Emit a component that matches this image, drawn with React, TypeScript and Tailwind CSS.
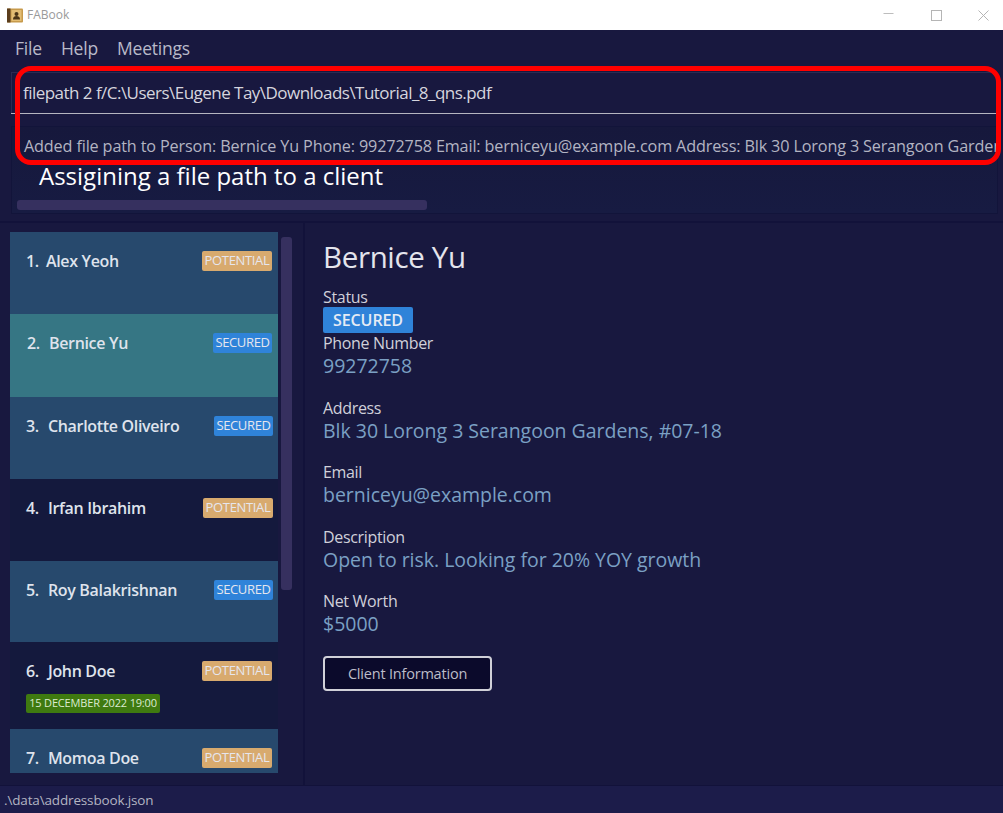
const font = "font-['Open_Sans','Noto_Sans',sans-serif]"

type Client = {
  index: number
  name: string
  status: 'POTENTIAL' | 'SECURED'
  height: string
  bg: string
  pad: string
  meeting?: string
}

const clients: Client[] = [
  { index: 1, name: 'Alex Yeoh', status: 'POTENTIAL', height: 'h-[82px]', bg: 'bg-[#27496d]', pad: 'pl-4 pr-[6px]' },
  { index: 2, name: 'Bernice Yu', status: 'SECURED', height: 'h-[83px]', bg: 'bg-[#367684]', pad: 'pl-[17px] pr-[6px]' },
  { index: 3, name: 'Charlotte Oliveiro', status: 'SECURED', height: 'h-[82px]', bg: 'bg-[#27496d]', pad: 'pl-4 pr-[5px]' },
  { index: 4, name: 'Irfan Ibrahim', status: 'POTENTIAL', height: 'h-[82px]', bg: 'bg-[#14193d]', pad: 'pl-4 pr-[5px]' },
  { index: 5, name: 'Roy Balakrishnan', status: 'SECURED', height: 'h-[81px]', bg: 'bg-[#27496d]', pad: 'pl-4 pr-[5px]' },
  { index: 6, name: 'John Doe', status: 'POTENTIAL', height: 'h-[87px]', bg: 'bg-[#14193d]', pad: 'pl-4 pr-[6px]', meeting: '15 DECEMBER 2022 19:00' },
  { index: 7, name: 'Momoa Doe', status: 'POTENTIAL', height: 'h-[44px]', bg: 'bg-[#27496d]', pad: 'pl-4 pr-[6px]' },
]

const details = [
  { label: 'Address', value: 'Blk 30 Lorong 3 Serangoon Gardens, #07-18' },
  { label: 'Email', value: 'berniceyu@example.com' },
  { label: 'Description', value: 'Open to risk. Looking for 20% YOY growth' },
  { label: 'Net Worth', value: '$5000' },
]

function StatusTag({ status }: { status: Client['status'] }) {
  const color = status === 'SECURED' ? 'bg-[#2f83d9] w-[59px]' : 'bg-[#d8aa6e] w-[70px]'
  return (
    <span className={`${color} flex h-5 items-center justify-center rounded-[2px] text-[13px] tracking-[-0.35px] text-[#e6e6ee]`}>
      {status}
    </span>
  )
}

function ClientCard({ client }: { client: Client }) {
  return (
    <div className={`${client.height} ${client.bg} ${client.pad} shrink-0 overflow-hidden pt-[18px]`}>
      <div className="flex items-center justify-between">
        <span className="flex text-[16px] leading-[22px] font-semibold tracking-[-0.32px] text-[#dfe3ec]">
          <span>{client.index}.</span>
          <span className={client.index === 1 ? 'ml-[7px]' : 'ml-[9px]'}>{client.name}</span>
        </span>
        <StatusTag status={client.status} />
      </div>
      {client.meeting && (
        <span className="mt-[12px] flex h-[19px] w-[134px] items-center justify-center rounded-[2px] bg-[#3f7a10] text-[11px] tracking-[-0.17px] text-[#dcebd0]">
          {client.meeting}
        </span>
      )}
    </div>
  )
}

function Field({ label, value }: { label: string; value: string }) {
  return (
    <div className="mb-[19.5px] flex flex-col">
      <span className="text-[16px] leading-[20px] tracking-[-0.33px] text-[#d0d0da]">{label}</span>
      <span className="text-[19.5px] leading-[25px] tracking-[-0.02px] text-[#7ba0c4]">{value}</span>
    </div>
  )
}

export default function App() {
  return (
    <div className={`${font} relative flex h-[813px] w-[1003px] flex-col overflow-hidden bg-[#18183f]`}>
      <header className="flex h-[30px] shrink-0 items-center bg-white pl-[7px]">
        <svg width="16" height="15" viewBox="0 0 16 15">
          <rect x="0" y="0.5" width="16" height="14" rx="1" fill="#c79a4b" />
          <rect x="0" y="0.5" width="3.5" height="14" fill="#5b3d1c" />
          <rect x="4.5" y="2" width="10" height="11" fill="#e3bd74" />
          <circle cx="9.5" cy="6" r="2" fill="#4a3416" />
          <path d="M6 11.5c0-2.4 1.600-3.400 3.500-3.400s3.500 1 3.500 3.400z" fill="#4a3416" />
        </svg>
        <span className="ml-[4px] text-[12px] text-[#9a9a9a]">FABook</span>
        <div className="ml-auto flex items-center gap-[36.5px] pr-[14px]">
          <svg width="11" height="11" viewBox="0 0 11 11">
            <path d="M0.500 3.500h10" stroke="#bdbdbd" strokeWidth="1" />
          </svg>
          <svg width="11" height="11" viewBox="0 0 11 11">
            <rect x="0.500" y="0.500" width="10" height="10" fill="none" stroke="#b5b5b5" />
          </svg>
          <svg width="11" height="11" viewBox="0 0 11 11">
            <path d="M0.500 0.500l10 10M10.500 0.500l-10 10" stroke="#b5b5b5" />
          </svg>
        </div>
      </header>

      <nav className="flex h-[36px] shrink-0 items-center gap-[19px] pl-[15px] text-[17.5px] tracking-[-0.2px] text-[#b9bac9]">
        <span>File</span>
        <span>Help</span>
        <span>Meetings</span>
      </nav>

      <div className="flex h-[52px] shrink-0 flex-col pt-[6px] pr-[7px] pl-[11px]">
        <div className="flex h-[41px] items-center border-t border-l border-[#2b2b52] pl-[11px] text-[17px] tracking-[-0.53px] text-[#d5d5de]">
          filepath 2 f/C:\Users\Eugene Tay\Downloads\Tutorial_8_qns.pdf
        </div>
        <div className="h-[1px] bg-[#b5b5c0]"></div>
      </div>

      <div className="flex h-[104px] shrink-0 flex-col border-b border-[#12123a] pt-[8px] pr-[5px] pl-[11px]">
        <div className="flex h-[88px] flex-col overflow-hidden border border-[#12143a] bg-[linear-gradient(#16183c,#171b42)] pl-[12px]">
          <p className="mt-[8px] whitespace-nowrap text-[16.2px] leading-[22px] tracking-[-0.14px] text-[#b3b4c2]">
            Added file path to Person: Bernice Yu Phone: 99272758 Email: berniceyu@example.com Address: Blk 30 Lorong 3 Serangoon Gardens, #07-18
          </p>
          <div className="mt-auto mb-[3px] -ml-[7px] h-[10px] w-[410px] shrink-0 rounded-[3px] bg-[#36305f]"></div>
        </div>
      </div>

      <main className="flex min-h-0 flex-1 border-t border-[#12123a]">
        <section className="flex w-[305px] shrink-0 border-r-[2px] border-[#12123a] pt-[9px] pl-[10px]">
          <div className="flex h-[541px] w-[268px] flex-col overflow-hidden">
            {clients.map((client) => (
              <ClientCard key={client.index} client={client} />
            ))}
          </div>
          <div className="mt-[5px] ml-[3px] h-[353px] w-[11px] rounded-[3px] bg-[#36305f]"></div>
        </section>

        <section className="flex flex-col pt-[14px] pl-[18px]">
          <h1 className="text-[29.5px] leading-[40px] tracking-[-0.35px] text-[#e4e4ec]">Bernice Yu</h1>
          <span className="mt-[10px] text-[16px] leading-[20px] tracking-[-0.33px] text-[#d0d0da]">Status</span>
          <span className="flex h-[26px] w-[90px] items-center justify-center rounded-[2px] bg-[#2f83d9] text-[16px] font-semibold tracking-[-0.1px] text-[#e6ecf5]">
            SECURED
          </span>
          <Field label="Phone Number" value="99272758" />
          {details.map((item) => (
            <Field key={item.label} label={item.label} value={item.value} />
          ))}
          <button className="mt-[0.5px] h-[35px] w-[169px] rounded-[4px] border-2 border-[#d0d0d8] bg-[#0b0a2b] text-[14.5px] tracking-[-0.2px] text-[#bcbcc8]">
            Client Information
          </button>
        </section>
      </main>

      <footer className="flex h-[28px] shrink-0 items-center border-t border-[#12123a] bg-[#1c1c4a] pt-[1px] pl-[4px] text-[13.5px] tracking-[-0.15px] text-[#b3b4c2]">
        .\data\addressbook.json
      </footer>

      {/* callout pasted over the screenshot */}
      <div className="pointer-events-none absolute top-[66px] left-[15px] h-[99px] w-[986px] rounded-[16px] border-[5px] border-[#ff0000]"></div>
      <span className="absolute top-[160px] left-[39px] text-[24px] leading-[32px] font-medium text-white">
        Assigining a file path to a client
      </span>
    </div>
  )
}
